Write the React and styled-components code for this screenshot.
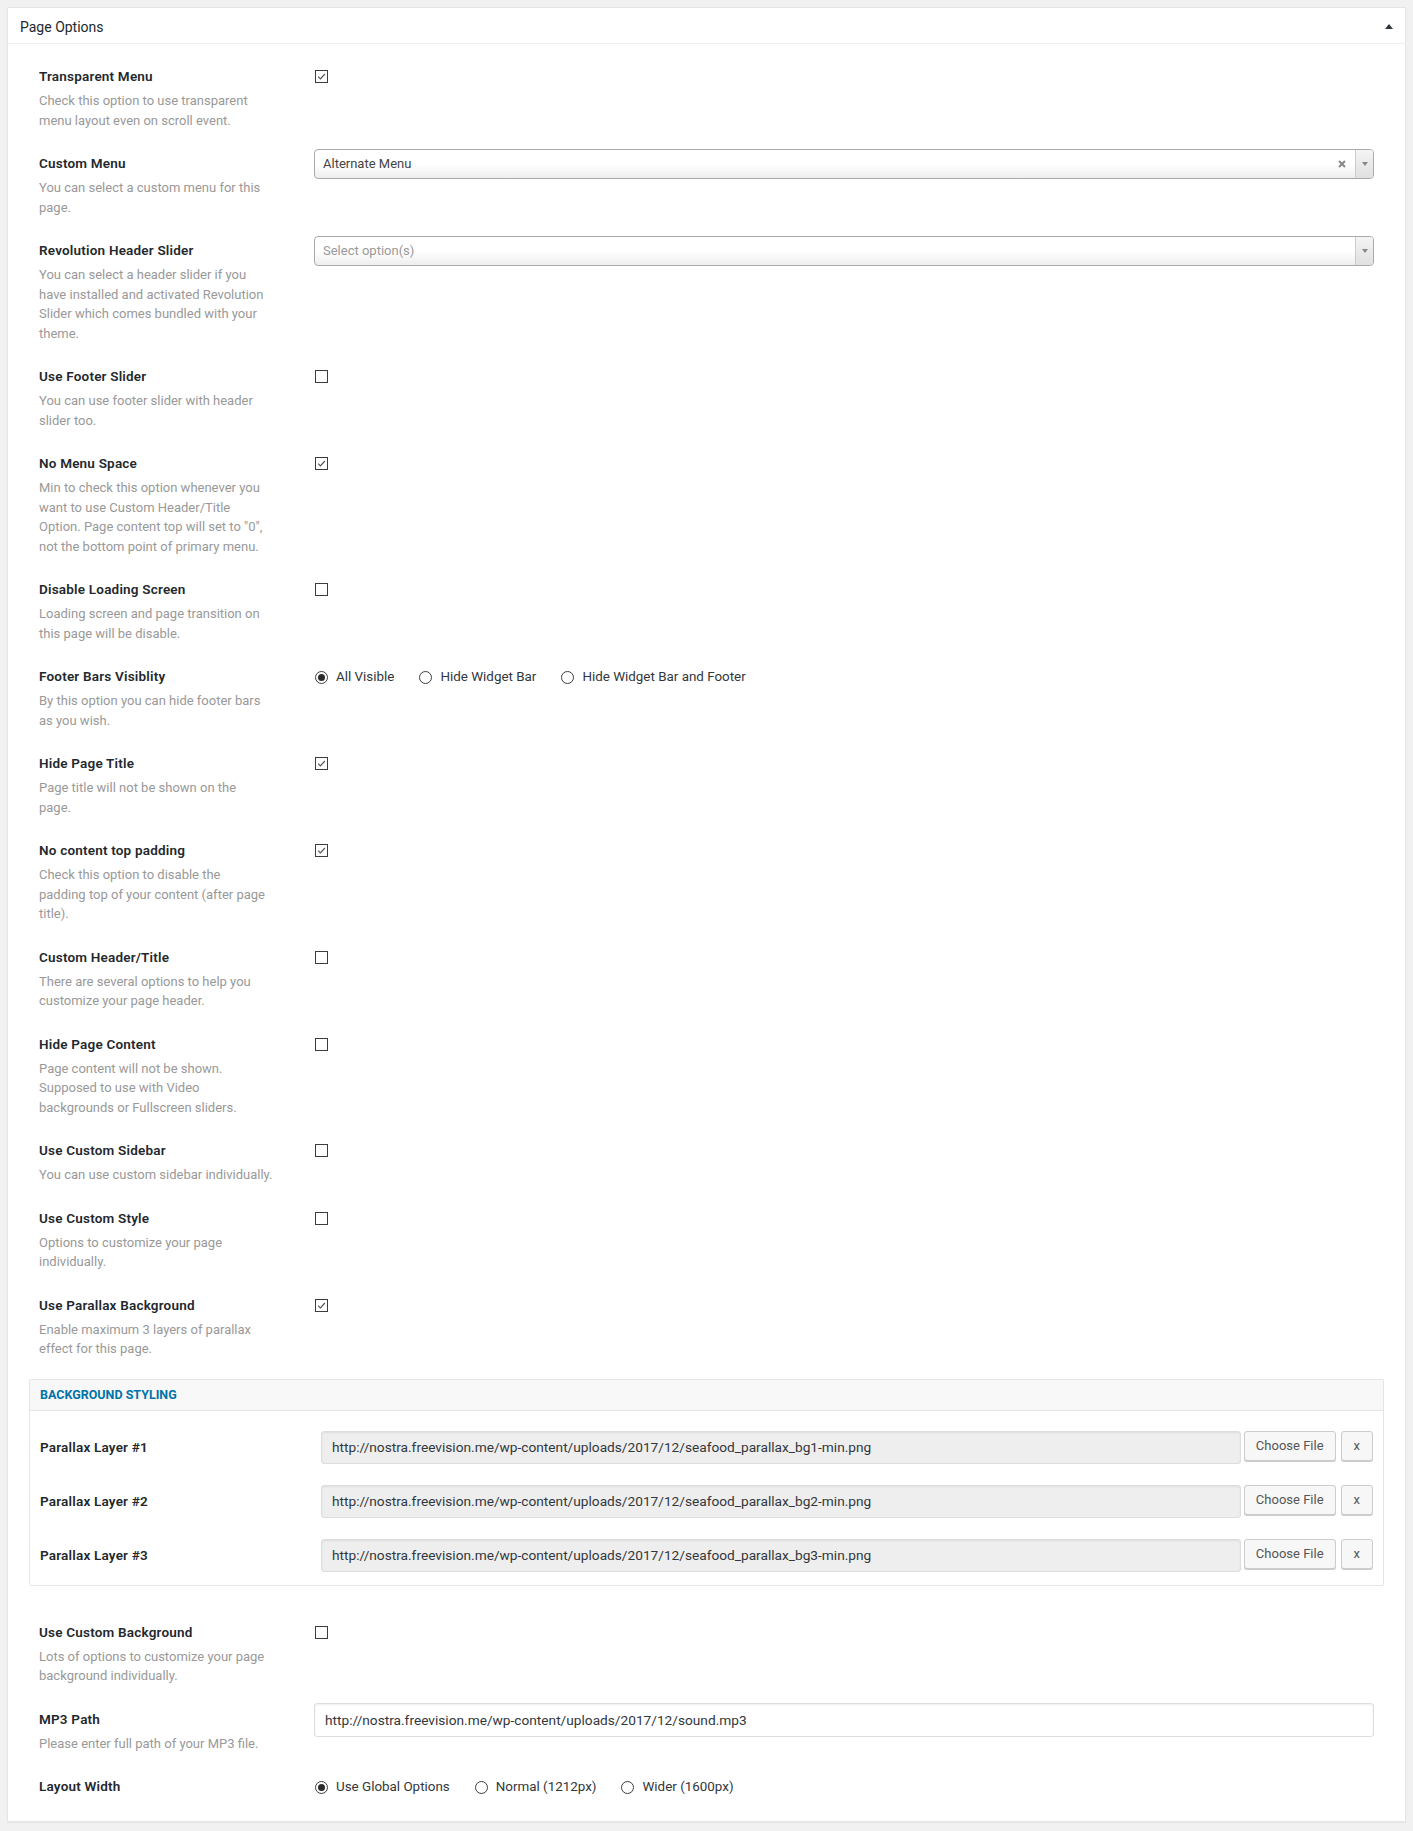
import React from 'react'
import styled, { createGlobalStyle } from 'styled-components'

const GlobalStyle = createGlobalStyle`
  * { box-sizing: border-box; }
  body {
    margin: 0;
    background: #f1f1f1;
    font-family: Roboto, "Liberation Sans", sans-serif;
    color: #23282d;
  }
`

const Page = styled.div`
  padding: 7px;
`

const Panel = styled.div`
  background: #fff;
  border: 1px solid #e5e5e5;
  box-shadow: 0 1px 1px rgba(0, 0, 0, 0.04);
`

const PanelHeader = styled.div`
  height: 36px;
  border-bottom: 1px solid #eee;
  display: flex;
  align-items: center;
  justify-content: space-between;
  padding: 2px 12px 0;
  font-size: 14px;
  color: #23282d;
`

const PanelBody = styled.div`
  padding: 19px 31px 4px;
`

const Row = styled.div`
  display: grid;
  grid-template-columns: 243px 1fr;
  column-gap: 33px;
  padding-bottom: 20px;
`

const Title = styled.div`
  padding-top: 3px;
  padding-bottom: 1px;
  line-height: 20px;
  font-size: 13.5px;
  letter-spacing: 0.2px;
  font-weight: 600;
  color: #23282d;
`

const Desc = styled.div`
  margin-top: 4px;
  line-height: 19.5px;
  font-size: 13px;
  color: #999;
  white-space: pre-line;
`

const Box = styled.span`
  display: block;
  width: 13px;
  height: 13px;
  margin-top: 7px;
  border: 1px solid #3c3c3c;
  background: #fff;
  svg { display: block; }
`

const Select = styled.div`
  margin-top: -1px;
  height: 30px;
  margin-left: -1px;
  display: flex;
  align-items: stretch;
  border: 1px solid #aaa;
  border-radius: 4px;
  background: linear-gradient(#fff 50%, #eee 100%);
  font-size: 13px;
  overflow: hidden;
`

const SelectValue = styled.div`
  flex: 1;
  display: flex;
  align-items: center;
  padding: 0 0 1px 8px;
  color: ${p => (p.$placeholder ? '#999' : '#444')};
`

const Clear = styled.div`
  width: 26px;
  display: flex;
  align-items: center;
  justify-content: center;
`

const Arrow = styled.div`
  width: 18px;
  border-left: 1px solid #ccc;
  background: linear-gradient(#f4f4f4, #e0e0e0);
  display: flex;
  align-items: center;
  justify-content: center;
`

const TextInput = styled.div`
  margin-top: -3px;
  margin-left: -1px;
  height: 34px;
  display: flex;
  align-items: center;
  padding: 0 10px;
  border: 1px solid #ddd;
  border-radius: 3px;
  box-shadow: inset 0 1px 2px rgba(0, 0, 0, 0.07);
  background: ${p => (p.$readonly ? '#eee' : '#fff')};
  font-size: 13.7px;
  color: #32373c;
`

const RadioGroup = styled.div`
  display: flex;
  padding-top: 4px;
  line-height: 20px;
`

const RadioItem = styled.label`
  display: flex;
  align-items: center;
  gap: 8px;
  margin-right: 25px;
  font-size: 13.4px;
  color: #32373c;
`

const Dot = styled.span`
  width: 13px;
  height: 13px;
  border-radius: 50%;
  border: 1px solid #3c3c3c;
  display: flex;
  align-items: center;
  justify-content: center;
  &::after {
    content: '';
    width: 7px;
    height: 7px;
    border-radius: 50%;
    background: ${p => (p.$on ? '#2b2b2b' : 'transparent')};
  }
`

const Section = styled.div`
  margin: 0 -10px 33px;
  border: 1px solid #e5e5e5;
  border-radius: 2px;
`

const SectionHead = styled.div`
  height: 31px;
  display: flex;
  align-items: center;
  padding: 0 10px;
  background: #f8f8f8;
  border-bottom: 1px solid #e5e5e5;
  color: #0073aa;
  font-size: 12.5px;
  font-weight: 700;
  text-transform: uppercase;
`

const SectionBody = styled.div`
  display: grid;
  row-gap: 21px;
  padding: 20px 10px 13px;
`

const FileRow = styled.div`
  display: grid;
  grid-template-columns: 281px 1fr auto auto;
  align-items: center;
`

const FileLabel = styled.div`
  font-size: 13.5px;
  letter-spacing: 0.2px;
  font-weight: 600;
  color: #23282d;
`

const FileInput = styled(TextInput)`
  margin: 0;
  height: 33px;
`

const Button = styled.button`
  align-self: start;
  height: 30px;
  margin-left: ${p => (p.$small ? '5px' : '3px')};
  padding: 0 ${p => (p.$small ? '12px' : '11px')};
  border: 1px solid #ccc;
  border-radius: 3px;
  background: #f7f7f7;
  box-shadow: 0 1px 0 #ccc;
  font-family: inherit;
  font-size: 13px;
  color: #555;
`

const Check = ({ on }) => (
  <Box>
    {on && (
      <svg width="11" height="11" viewBox="0 0 11 11">
        <path d="M2.2 5.6 L4.4 7.9 L8.9 3" fill="none" stroke="#555" strokeWidth="1.2" />
      </svg>
    )}
  </Box>
)

const Radios = ({ options, value }) => (
  <RadioGroup>
    {options.map(o => (
      <RadioItem key={o}>
        <Dot $on={o === value} />
        {o}
      </RadioItem>
    ))}
  </RadioGroup>
)

const Option = ({ title, desc, children }) => (
  <Row>
    <div>
      <Title>{title}</Title>
      {desc && <Desc>{desc}</Desc>}
    </div>
    <div>{children}</div>
  </Row>
)

const ChosenSelect = ({ value, placeholder }) => (
  <Select>
    <SelectValue $placeholder={!value}>{value || placeholder}</SelectValue>
    {value && (
      <Clear>
        <svg width="8" height="8" viewBox="0 0 8 8">
          <path d="M1 1 L7 7 M7 1 L1 7" stroke="#888" strokeWidth="2" />
        </svg>
      </Clear>
    )}
    <Arrow>
      <svg width="6" height="4" viewBox="0 0 6 4">
        <path d="M0 0 H6 L3 4 Z" fill="#888" />
      </svg>
    </Arrow>
  </Select>
)

const layers = [1, 2, 3]

export default function App() {
  return (
    <Page>
      <GlobalStyle />
      <Panel>
        <PanelHeader>
          <span>Page Options</span>
          <svg width="8" height="5" viewBox="0 0 8 5">
            <path d="M0 5 L4 0 L8 5 Z" fill="#32373c" />
          </svg>
        </PanelHeader>
        <PanelBody>
          <Option title="Transparent Menu" desc={'Check this option to use transparent\nmenu layout even on scroll event.'}>
            <Check on />
          </Option>
          <Option title="Custom Menu" desc={'You can select a custom menu for this\npage.'}>
            <ChosenSelect value="Alternate Menu" />
          </Option>
          <Option
            title="Revolution Header Slider"
            desc={'You can select a header slider if you\nhave installed and activated Revolution\nSlider which comes bundled with your\ntheme.'}
          >
            <ChosenSelect placeholder="Select option(s)" />
          </Option>
          <Option title="Use Footer Slider" desc={'You can use footer slider with header\nslider too.'}>
            <Check />
          </Option>
          <Option
            title="No Menu Space"
            desc={'Min to check this option whenever you\nwant to use Custom Header/Title\nOption. Page content top will set to "0",\nnot the bottom point of primary menu.'}
          >
            <Check on />
          </Option>
          <Option title="Disable Loading Screen" desc={'Loading screen and page transition on\nthis page will be disable.'}>
            <Check />
          </Option>
          <Option title="Footer Bars Visiblity" desc={'By this option you can hide footer bars\nas you wish.'}>
            <Radios options={['All Visible', 'Hide Widget Bar', 'Hide Widget Bar and Footer']} value="All Visible" />
          </Option>
          <Option title="Hide Page Title" desc={'Page title will not be shown on the\npage.'}>
            <Check on />
          </Option>
          <Option
            title="No content top padding"
            desc={'Check this option to disable the\npadding top of your content (after page\ntitle).'}
          >
            <Check on />
          </Option>
          <Option title="Custom Header/Title" desc={'There are several options to help you\ncustomize your page header.'}>
            <Check />
          </Option>
          <Option
            title="Hide Page Content"
            desc={'Page content will not be shown.\nSupposed to use with Video\nbackgrounds or Fullscreen sliders.'}
          >
            <Check />
          </Option>
          <Option title="Use Custom Sidebar" desc="You can use custom sidebar individually.">
            <Check />
          </Option>
          <Option title="Use Custom Style" desc={'Options to customize your page\nindividually.'}>
            <Check />
          </Option>
          <Option title="Use Parallax Background" desc={'Enable maximum 3 layers of parallax\neffect for this page.'}>
            <Check on />
          </Option>

          <Section>
            <SectionHead>Background Styling</SectionHead>
            <SectionBody>
              {layers.map(n => (
                <FileRow key={n}>
                  <FileLabel>Parallax Layer #{n}</FileLabel>
                  <FileInput $readonly>
                    {`http://nostra.freevision.me/wp-content/uploads/2017/12/seafood_parallax_bg${n}-min.png`}
                  </FileInput>
                  <Button>Choose File</Button>
                  <Button $small>x</Button>
                </FileRow>
              ))}
            </SectionBody>
          </Section>

          <Option title="Use Custom Background" desc={'Lots of options to customize your page\nbackground individually.'}>
            <Check />
          </Option>
          <Option title="MP3 Path" desc="Please enter full path of your MP3 file.">
            <TextInput>http://nostra.freevision.me/wp-content/uploads/2017/12/sound.mp3</TextInput>
          </Option>
          <Option title="Layout Width">
            <Radios options={['Use Global Options', 'Normal (1212px)', 'Wider (1600px)']} value="Use Global Options" />
          </Option>
        </PanelBody>
      </Panel>
    </Page>
  )
}
